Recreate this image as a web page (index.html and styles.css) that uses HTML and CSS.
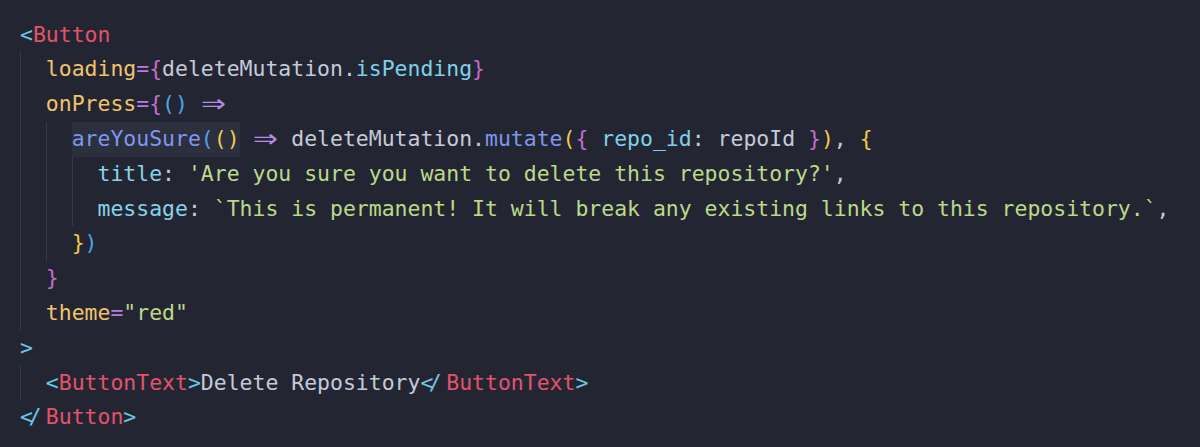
FILE: index.html
```html
<!DOCTYPE html>
<html>
<head>
<meta charset="utf-8">
<link rel="stylesheet" href="styles.css">
</head>
<body>
<div class="code">
  <div class="ln"><span class="br">&lt;</span><span class="tag">Button</span></div>
  <div class="blk">
    <div class="ln"><span class="attr">loading</span><span class="eq">=</span><span class="b1">{</span><span class="txt">deleteMutation</span><span class="txt">.</span><span class="prop">isPending</span><span class="b1">}</span></div>
    <div class="ln"><span class="attr">onPress</span><span class="eq">=</span><span class="b1">{</span><span class="b2">()</span> <span class="arrow"><span class="ag">⇒</span></span></div>
    <div class="blk">
      <div class="ln"><span class="hl"><span class="fn">areYouSure</span><span class="b2">(</span><span class="b3">()</span></span> <span class="arrow"><span class="ag">⇒</span></span> <span class="txt">deleteMutation.</span><span class="fn">mutate</span><span class="b3">(</span><span class="b1">{</span> <span class="prop">repo_id</span><span class="txt">:</span> <span class="txt">repoId</span> <span class="b1">}</span><span class="b3">)</span><span class="txt">,</span> <span class="b3">{</span></div>
      <div class="blk">
        <div class="ln"><span class="key">title</span><span class="txt">:</span> <span class="str">'Are you sure you want to delete this repository?'</span><span class="txt">,</span></div>
        <div class="ln"><span class="key">message</span><span class="txt">:</span> <span class="str">`This is permanent! It will break any existing links to this repository.`</span><span class="txt">,</span></div>
      </div>
      <div class="ln"><span class="b3">}</span><span class="b2">)</span></div>
    </div>
    <div class="ln"><span class="b1">}</span></div>
    <div class="ln"><span class="attr">theme</span><span class="eq">=</span><span class="str">"red"</span></div>
  </div>
  <div class="ln"><span class="br">&gt;</span></div>
  <div class="blk">
    <div class="ln"><span class="br">&lt;</span><span class="tag">ButtonText</span><span class="br">&gt;</span><span class="txt">Delete Repository</span><span class="close">&lt;/</span><span class="tag">ButtonText</span><span class="br">&gt;</span></div>
  </div>
  <div class="ln"><span class="close">&lt;/</span><span class="tag">Button</span><span class="br">&gt;</span></div>
</div>
</body>
</html>
```
FILE: styles.css
```css
html, body {
  margin: 0;
  padding: 0;
  background: #232632;
}
body {
  width: 1200px;
  height: 447px;
  overflow: hidden;
}
.code {
  font-family: "DejaVu Sans Mono", monospace;
  font-size: 21.46px;
  line-height: 34.8px;
  color: #c5cadb;
  padding: 17.6px 0 0 20px;
}
.ln {
  white-space: pre;
  height: 34.8px;
}
.blk {
  border-left: 1px solid #363a4a;
  padding-left: calc(2ch - 1px);
}
.br { color: #6cc6e8; }
.tag { color: #e4526a; }
.attr { color: #f1c36c; }
.eq { color: #b47fde; }
.b1 { color: #c76bcf; }
.b2 { color: #4ba3ec; }
.b3 { color: #f4c84e; }
.txt { color: #c5cadb; }
.prop { color: #7fd0ea; }
.key { color: #86d3ea; }
.fn { color: #7e97ed; }
.str { color: #bcd98a; }
.arrow {
  display: inline-block;
  width: 2ch;
  text-align: center;
  color: #b88ae6;
  vertical-align: top;
  height: 34.8px;
  overflow: visible;
}
.ag {
  display: inline-block;
  transform: scale(1.9, 1.5);
  transform-origin: 50% 58%;
}
.hl {
  background: #2b2f3e;
  display: inline-block;
  height: 34.8px;
  vertical-align: top;
}
.close {
  display: inline-block;
  width: 2ch;
  letter-spacing: -0.35ch;
  color: #6cc6e8;
}
```
